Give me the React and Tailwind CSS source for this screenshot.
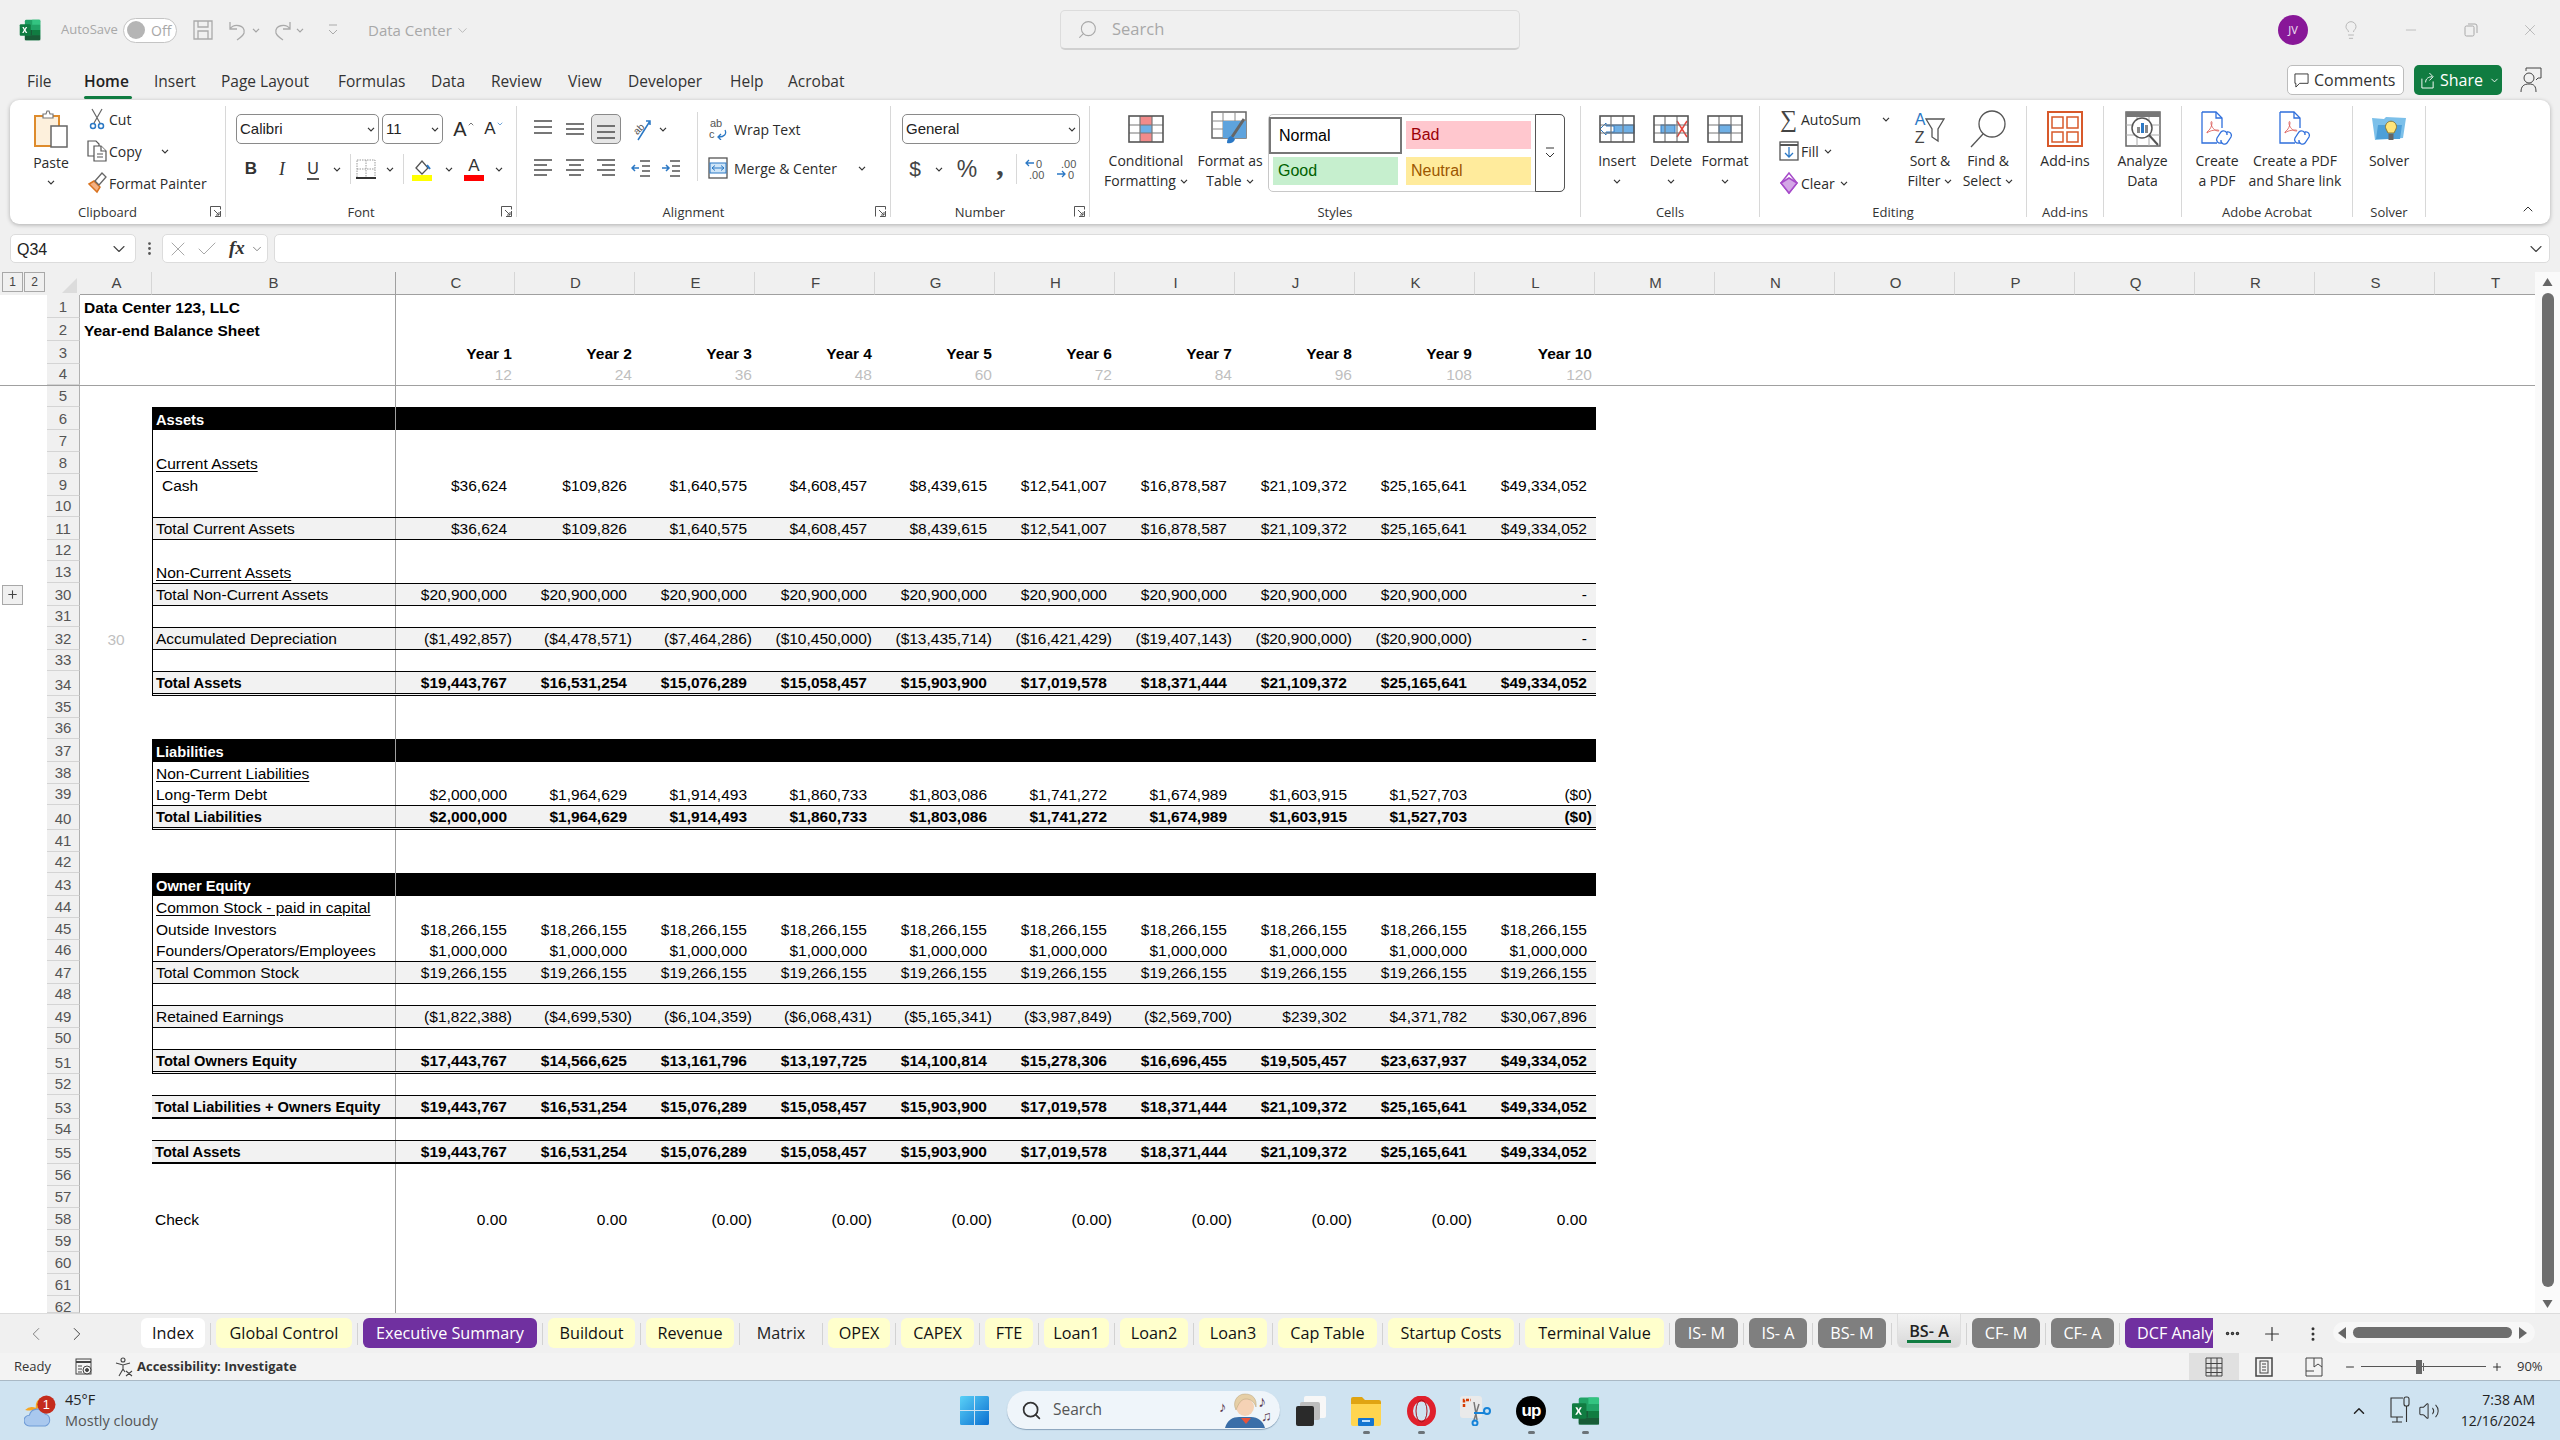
import { ChevronDown, ChevronLeft, ChevronRight, ChevronUp, Search, X, Check, Plus, Minus, MoreVertical, MoreHorizontal, Volume2, Lightbulb } from "lucide-react";

const Y1 = ["$19,443,767", "$16,531,254", "$15,076,289", "$15,058,457", "$15,903,900", "$17,019,578", "$18,371,444", "$21,109,372", "$25,165,641", "$49,334,052"];
const CASH = ["$36,624", "$109,826", "$1,640,575", "$4,608,457", "$8,439,615", "$12,541,007", "$16,878,587", "$21,109,372", "$25,165,641", "$49,334,052"];
const rep = (v, n = 10) => Array(n).fill(v);

// h = row height, everything is bottom aligned like excel does it
const ROWS = [
  { n: 1, h: "h-[23px]", a: "Data Center 123, LLC", boldA: true },
  { n: 2, h: "h-[23px]", a: "Year-end Balance Sheet", boldA: true },
  { n: 3, h: "h-[23px]", vals: ["Year 1", "Year 2", "Year 3", "Year 4", "Year 5", "Year 6", "Year 7", "Year 8", "Year 9", "Year 10"], year: true },
  { n: 4, h: "h-[22px]", vals: ["12", "24", "36", "48", "60", "72", "84", "96", "108", "120"], grey: true, freeze: true },
  { n: 5, h: "h-[21px]" },
  { n: 6, h: "h-[23px]", label: "Assets", black: true, left: true },
  { n: 7, h: "h-[22px]", left: true },
  { n: 8, h: "h-[22px]", label: "Current Assets", under: true, left: true },
  { n: 9, h: "h-[22px]", label: "Cash", indent: true, vals: CASH, left: true },
  { n: 10, h: "h-[21px]", left: true },
  { n: 11, h: "h-[23px]", label: "Total Current Assets", vals: CASH, band: true, left: true },
  { n: 12, h: "h-[21px]", left: true },
  { n: 13, h: "h-[22px]", label: "Non-Current Assets", under: true, left: true },
  { n: 30, h: "h-[23px]", label: "Total Non-Current Assets", vals: [...rep("$20,900,000", 9), "-"], band: true, left: true, plus: true },
  { n: 31, h: "h-[21px]", left: true },
  { n: 32, h: "h-[23px]", label: "Accumulated Depreciation", colA: "30", vals: ["($1,492,857)", "($4,478,571)", "($7,464,286)", "($10,450,000)", "($13,435,714)", "($16,421,429)", "($19,407,143)", "($20,900,000)", "($20,900,000)", "-"], band: true, left: true },
  { n: 33, h: "h-[21px]", left: true },
  { n: 34, h: "h-[25px]", label: "Total Assets", vals: Y1, band: true, bold: true, dbl: true, left: true },
  { n: 35, h: "h-[22px]" },
  { n: 36, h: "h-[21px]" },
  { n: 37, h: "h-[23px]", label: "Liabilities", black: true, left: true },
  { n: 38, h: "h-[22px]", label: "Non-Current Liabilities", under: true, left: true },
  { n: 39, h: "h-[21px]", label: "Long-Term Debt", vals: ["$2,000,000", "$1,964,629", "$1,914,493", "$1,860,733", "$1,803,086", "$1,741,272", "$1,674,989", "$1,603,915", "$1,527,703", "($0)"], left: true },
  { n: 40, h: "h-[25px]", label: "Total Liabilities", vals: ["$2,000,000", "$1,964,629", "$1,914,493", "$1,860,733", "$1,803,086", "$1,741,272", "$1,674,989", "$1,603,915", "$1,527,703", "($0)"], band: true, bold: true, dbl: true, left: true },
  { n: 41, h: "h-[22px]" },
  { n: 42, h: "h-[21px]" },
  { n: 43, h: "h-[23px]", label: "Owner Equity", black: true, left: true },
  { n: 44, h: "h-[22px]", label: "Common Stock - paid in capital", under: true, left: true },
  { n: 45, h: "h-[22px]", label: "Outside Investors", vals: rep("$18,266,155"), left: true },
  { n: 46, h: "h-[21px]", label: "Founders/Operators/Employees", vals: rep("$1,000,000"), left: true },
  { n: 47, h: "h-[23px]", label: "Total Common Stock", vals: rep("$19,266,155"), band: true, left: true },
  { n: 48, h: "h-[21px]", left: true },
  { n: 49, h: "h-[23px]", label: "Retained Earnings", vals: ["($1,822,388)", "($4,699,530)", "($6,104,359)", "($6,068,431)", "($5,165,341)", "($3,987,849)", "($2,569,700)", "$239,302", "$4,371,782", "$30,067,896"], band: true, left: true },
  { n: 50, h: "h-[21px]", left: true },
  { n: 51, h: "h-[25px]", label: "Total Owners Equity", vals: ["$17,443,767", "$14,566,625", "$13,161,796", "$13,197,725", "$14,100,814", "$15,278,306", "$16,696,455", "$19,505,457", "$23,637,937", "$49,334,052"], band: true, bold: true, dbl: true, left: true },
  { n: 52, h: "h-[21px]" },
  { n: 53, h: "h-[24px]", label: "Total Liabilities + Owners Equity", vals: Y1, band: true, bold: true, thick: true },
  { n: 54, h: "h-[21px]" },
  { n: 55, h: "h-[24px]", label: "Total Assets", vals: Y1, band: true, bold: true, thick: true },
  { n: 56, h: "h-[22px]" },
  { n: 57, h: "h-[22px]" },
  { n: 58, h: "h-[22px]", label: "Check", vals: ["0.00", "0.00", "(0.00)", "(0.00)", "(0.00)", "(0.00)", "(0.00)", "(0.00)", "(0.00)", "0.00"] },
  { n: 59, h: "h-[22px]" },
  { n: 60, h: "h-[22px]" },
  { n: 61, h: "h-[22px]" },
  { n: 62, h: "h-[17px]", last: true },
];

const YEL = "bg-[#ffffcc] text-[#111]";
const GRY = "bg-[#7f7f7f] text-white";
const PUR = "bg-[#7030a0] text-white";
const TABS = [
  ["Index", "w-[64px]", "bg-white text-[#111]"],
  ["Global Control", "w-[136px]", YEL],
  ["Executive Summary", "w-[174px]", PUR],
  ["Buildout", "w-[87px]", YEL],
  ["Revenue", "w-[88px]", YEL],
  ["Matrix", "w-[72px]", "text-[#222]"],
  ["OPEX", "w-[62px]", YEL],
  ["CAPEX", "w-[73px]", YEL],
  ["FTE", "w-[48px]", YEL],
  ["Loan1", "w-[65px]", YEL],
  ["Loan2", "w-[68px]", YEL],
  ["Loan3", "w-[68px]", YEL],
  ["Cap Table", "w-[99px]", YEL],
  ["Startup Costs", "w-[126px]", YEL],
  ["Terminal Value", "w-[139px]", YEL],
  ["IS- M", "w-[63px]", GRY],
  ["IS- A", "w-[58px]", GRY],
  ["BS- M", "w-[68px]", GRY],
  ["BS- A", "w-[64px]", "active"],
  ["CF- M", "w-[68px]", GRY],
  ["CF- A", "w-[63px]", GRY],
  ["DCF Analysis", "w-[120px]", PUR],
];

const Chev = ({ className = "" }) => (
  <svg viewBox="0 0 8 5" className={`h-[5px] w-[8px] flex-none ${className}`} fill="none" stroke="#333" strokeWidth="1.2">
    <path d="M1 .8l3 3 3-3" />
  </svg>
);

function ExcelLogo({ className }) {
  return (
    <svg viewBox="0 0 30 30" className={className}>
      <rect x="8" y="1" width="21" height="28" rx="2" fill="#21a366" />
      <rect x="18" y="1" width="11" height="7" fill="#33c481" />
      <rect x="18" y="8" width="11" height="7" fill="#21a366" />
      <rect x="18" y="15" width="11" height="7" fill="#107c41" />
      <rect x="8" y="15" width="10" height="7" fill="#185c37" />
      <rect x="8" y="22" width="21" height="7" fill="#185c37" />
      <rect x="1" y="7" width="15" height="16" rx="1.5" fill="#107c41" />
      <path d="M4.5 11l2.2 4-2.4 4h2l1.5-2.8L9.3 19h2l-2.4-4 2.3-4h-2L7.9 13.7 6.5 11z" fill="#fff" />
    </svg>
  );
}

function GridIcon({ children, className = "w-[36px] h-[28px]" }) {
  return (
    <svg viewBox="0 0 36 28" className={className} fill="none">
      <rect x="1" y="1" width="34" height="26" fill="#fff" />
      {children}
      <path d="M12 1v26M24 1v26M1 10h34M1 18h34" stroke="#777" strokeWidth="1.2" />
      <rect x="1" y="1" width="34" height="26" stroke="#555" strokeWidth="1.6" />
    </svg>
  );
}

const Align = ({ lines }) => (
  <svg viewBox="0 0 20 20" className="h-[20px] w-[20px]" stroke="#555" strokeWidth="1.6" fill="none">
    {lines.map((l, i) => <path key={i} d={`M${l[0]} ${l[2]}H${l[1]}`} />)}
  </svg>
);

function Small({ icon, children, w = "w-[25px]", chev, chevClass = "ml-[5px]" }) {
  return (
    <div className="flex h-[28px] items-center">
      <div className={`flex ${w} flex-none items-center justify-center`}>{icon}</div>
      <span className="whitespace-nowrap">{children}</span>
      {chev && <Chev className={chevClass} />}
    </div>
  );
}

function Big({ w, icon, l1, l2, chev }) {
  return (
    <div className={`flex ${w} flex-none flex-col items-center pt-[4px]`}>
      <div className="flex h-[38px] items-center justify-center">{icon}</div>
      <div className="mt-[3px] whitespace-nowrap text-center leading-[20px]">{l1}</div>
      <div className="flex h-[20px] items-center justify-center whitespace-nowrap leading-[20px]">
        {l2}
        {chev && <Chev className={l2 ? "ml-[4px]" : ""} />}
      </div>
    </div>
  );
}

function Launcher() {
  return (
    <svg viewBox="0 0 11 11" className="absolute bottom-[0px] right-[4px] h-[11px] w-[11px]" fill="none" stroke="#555" strokeWidth="1">
      <path d="M.5 10.5V.5h10v3M10.5 5v5.5H5M4 4l5 5M9 6v3H6" />
    </svg>
  );
}

function Group({ w, label, launcher, children }) {
  return (
    <div className={`relative flex h-[111px] flex-none flex-col ${w} border-r border-[#d8d8d8]`}>
      <div className="flex h-[95px] flex-none">{children}</div>
      {label && <div className={`-mb-[3px] mt-auto h-[16px] text-center text-[13px] leading-[16px] text-[#333] ${launcher ? "pr-[20px]" : ""}`}>{label}</div>}
      {launcher && <Launcher />}
    </div>
  );
}

const Slot = ({ w, children }) => <div className={`flex ${w} h-[28px] flex-none items-center justify-center`}>{children}</div>;
const VSep = () => <div className="h-[30px] w-px flex-none bg-[#d8d8d8]" />;

function DropBox({ w, children }) {
  return (
    <div className={`flex h-[30px] ${w} flex-none items-center justify-between rounded-[5px] border border-[#8a8a8a] bg-white pl-[3px] pr-[3px] text-[#222]`}>
      <span className="font-['Liberation_Sans',sans-serif] text-[15px]">{children}</span>
      <Chev />
    </div>
  );
}

const StyleCell = ({ cls, children }) => (
  <div className={`flex h-[28px] w-[125px] items-center pl-[5px] font-['Liberation_Sans',sans-serif] text-[16px] ${cls}`}>{children}</div>
);

function PdfIcon() {
  return (
    <svg viewBox="0 0 32 36" className="h-[36px] w-[32px]" fill="none" stroke="#2f6fdc" strokeWidth="1.3">
      <path d="M1 1h14l6 6v10M1 1v31h15" fill="#fff" />
      <path d="M15 1v6h6" />
      <path d="M6 21c3-2 5-6 5-9 0-2-1-2-1 0 0 4 4 8 7 8 2 0 1-1-1-1-4 0-8 1-10 3z" stroke="#d9534f" strokeWidth=".8" />
      <path d="M20 32a3.5 3.5 0 0 1-4-5l4-6a3.5 3.5 0 0 1 6 3M26 21a3.5 3.5 0 0 1 4 5l-4 6a3.5 3.5 0 0 1-6-3" />
    </svg>
  );
}

function Ribbon() {
  return (
    <div className="mx-[10px] flex h-[124px] flex-none items-start rounded-[9px] bg-white pt-[6px] text-[14px] text-[#2b2b2b] shadow-[0_1px_4px_rgba(0,0,0,0.28)]">
      <Group w="w-[216px]" label="Clipboard" launcher>
        <div className="ml-[8px] w-[66px]">
          <div className="flex flex-col items-center pt-[4px]">
            <svg viewBox="0 0 34 38" className="h-[38px] w-[34px]">
              <rect x="1" y="6" width="24" height="30" fill="#fdf0dc" stroke="#de8b2c" strokeWidth="2" />
              <path d="M9 6V4h3l1-3 2 0 1 3h3v4H9z" fill="#fff" stroke="#777" strokeWidth="1.2" />
              <rect x="17" y="16" width="16" height="21" fill="#fff" stroke="#666" strokeWidth="1.5" />
            </svg>
            <div className="mt-[5px] leading-[20px]">Paste</div>
            <div className="flex h-[18px] items-center"><Chev /></div>
          </div>
        </div>
        <div className="-mt-[1px] flex flex-col gap-[4px]">
          <Small icon={<svg viewBox="0 0 16 22" className="h-[22px] w-[16px]" fill="none"><path d="M3 1l8 14M13 1L5 15" stroke="#666" strokeWidth="1.2" /><circle cx="4" cy="18" r="2.5" stroke="#2b78c5" strokeWidth="1.5" /><circle cx="12" cy="18" r="2.5" stroke="#2b78c5" strokeWidth="1.5" /></svg>}>Cut</Small>
          <Small chev chevClass="ml-[19px]" icon={<svg viewBox="0 0 20 22" className="h-[22px] w-[20px]" fill="#fff" stroke="#555" strokeWidth="1.2"><path d="M1 1h8l3 3v12H1z" /><path d="M7 6h7l5 5v10H7z" /><path d="M14 6v5h5M10 14h6M10 17h6" /></svg>}>Copy</Small>
          <Small icon={<svg viewBox="0 0 22 24" className="h-[24px] w-[22px]" fill="none"><path d="M3 13l8 8 3-5-6-6z" fill="#f4b183" stroke="#d9731f" strokeWidth="1.5" /><path d="M9 10l7-8 4 4-7 8z" fill="#fff" stroke="#666" strokeWidth="1.3" /></svg>}>Format Painter</Small>
        </div>
      </Group>

      <Group w="w-[291px]" label="Font" launcher>
        <div className="flex w-full flex-col pt-[8px]">
          <div className="flex items-center pl-[10px]">
            <DropBox w="w-[143px]">Calibri</DropBox>
            <DropBox w="w-[61px] ml-[3px]">11</DropBox>
            <div className="ml-[6px] flex w-[30px] items-center justify-center font-['Liberation_Sans',sans-serif] text-[20px]">A<ChevronUp size={8} className="mb-[10px] text-[#333]" /></div>
            <div className="flex w-[30px] items-center justify-center font-['Liberation_Sans',sans-serif] text-[17px]">A<ChevronDown size={8} className="mb-[10px] text-[#2b78c5]" /></div>
          </div>
          <div className="mt-[10px] flex items-center pl-[10px] font-['Liberation_Sans',sans-serif] text-[#333]">
            <Slot w="w-[30px]"><b className="text-[17px]">B</b></Slot>
            <Slot w="w-[32px]"><i className="font-['Liberation_Serif',serif] text-[18px]">I</i></Slot>
            <Slot w="w-[30px]"><span className="border-b-2 border-[#555] text-[16px] leading-[19px]">U</span></Slot>
            <Slot w="w-[18px]"><Chev /></Slot>
            <div className="ml-[4px]"><VSep /></div>
            <Slot w="w-[30px]">
              <svg viewBox="0 0 20 20" className="h-[20px] w-[20px]" fill="none" stroke="#999" strokeDasharray="1.5 1"><rect x="1" y="1" width="18" height="18" /><path d="M10 1v18M1 10h18" /><path d="M0 19h20" stroke="#333" strokeWidth="2" strokeDasharray="none" /></svg>
            </Slot>
            <Slot w="w-[18px]"><Chev /></Slot>
            <div className="ml-[4px]"><VSep /></div>
            <Slot w="w-[36px]">
              <svg viewBox="0 0 22 24" className="h-[24px] w-[22px]" fill="none"><path d="M5 11l6-7 6 7-6 6z" fill="#fff" stroke="#555" strokeWidth="1.3" /><path d="M16 8l3 4" stroke="#2b78c5" strokeWidth="2" /><rect x="1" y="18" width="20" height="6" fill="#ffff00" /></svg>
            </Slot>
            <Slot w="w-[18px]"><Chev /></Slot>
            <Slot w="w-[32px]">
              <div className="flex flex-col items-center"><span className="text-[17px] leading-[18px]">A</span><span className="h-[6px] w-[20px] bg-[#ff0000]" /></div>
            </Slot>
            <Slot w="w-[18px]"><Chev /></Slot>
          </div>
        </div>
      </Group>

      <Group w="w-[374px]" label="Alignment" launcher>
        <div className="flex w-[180px] flex-none flex-col pl-[10px] pt-[8px]">
          <div className="flex h-[30px] items-center">
            <div className="flex w-[32px] justify-center"><Align lines={[[1, 19, 2], [1, 19, 8], [1, 19, 14]]} /></div>
            <div className="flex w-[32px] justify-center"><Align lines={[[1, 19, 5], [1, 19, 10], [1, 19, 15]]} /></div>
            <div className="flex h-[30px] w-[30px] items-center justify-center rounded-[5px] border border-[#8a8a8a] bg-[#e6e6e6]"><Align lines={[[1, 19, 7], [1, 19, 13], [1, 19, 19]]} /></div>
            <div className="ml-[5px] flex w-[30px] justify-center">
              <svg viewBox="0 0 24 26" className="h-[26px] w-[24px]" fill="none"><path d="M9 24L21 5M17 5h4v4" stroke="#2b78c5" strokeWidth="1.5" /><text x="4" y="17" fontSize="10" fill="#555" transform="rotate(-45 9 13)" fontFamily="Liberation Sans">ab</text></svg>
            </div>
            <Chev className="ml-[3px]" />
          </div>
          <div className="mt-[10px] flex h-[28px] items-center">
            <div className="flex w-[32px] justify-center"><Align lines={[[1, 19, 2], [1, 14, 7], [1, 19, 12], [1, 14, 17]]} /></div>
            <div className="flex w-[32px] justify-center"><Align lines={[[1, 19, 2], [4, 16, 7], [1, 19, 12], [4, 16, 17]]} /></div>
            <div className="flex w-[30px] justify-center"><Align lines={[[1, 19, 2], [6, 19, 7], [1, 19, 12], [6, 19, 17]]} /></div>
            <div className="ml-[5px] flex w-[30px] justify-center">
              <svg viewBox="0 0 20 20" className="h-[20px] w-[20px]" fill="none" strokeWidth="1.5"><path d="M9 3h10M11 8h8M11 13h8M9 18h10" stroke="#555" /><path d="M8 10H1M4 7l-3 3 3 3" stroke="#2b78c5" /></svg>
            </div>
            <div className="flex w-[30px] justify-center">
              <svg viewBox="0 0 20 20" className="h-[20px] w-[20px]" fill="none" strokeWidth="1.5"><path d="M9 3h10M11 8h8M11 13h8M9 18h10" stroke="#555" /><path d="M1 10h7M5 7l3 3-3 3" stroke="#2b78c5" /></svg>
            </div>
          </div>
        </div>
        <div className="mb-[20px] mt-[6px] w-px flex-none bg-[#d8d8d8]" />
        <div className="flex flex-col pl-[10px] pt-[8px]">
          <div className="flex h-[30px] items-center">
            <div className="flex w-[26px] justify-start">
              <svg viewBox="0 0 20 22" className="h-[22px] w-[20px]" fill="none"><text x="2" y="9" fontSize="11" fill="#555" fontFamily="Liberation Sans">ab</text><text x="1" y="20" fontSize="11" fill="#555" fontFamily="Liberation Sans">c</text><path d="M17 12c2 4-1 7-6 7M13 16l-3 3 3 3" stroke="#2b78c5" strokeWidth="1.3" /></svg>
            </div>
            <span>Wrap Text</span>
          </div>
          <div className="mt-[10px] flex h-[28px] items-center">
            <div className="flex w-[26px] justify-start">
              <svg viewBox="0 0 20 22" className="h-[22px] w-[20px]" fill="none"><rect x="1" y="1" width="18" height="20" fill="#fff" stroke="#555" strokeWidth="1.3" /><rect x="2" y="6" width="16" height="10" fill="#cfe5f7" stroke="#2b78c5" /><path d="M4 11h12M7 8.5L4 11l3 2.5M13 8.5l3 2.5-3 2.5" stroke="#2b78c5" /></svg>
            </div>
            <span>Merge &amp; Center</span>
            <Chev className="ml-[21px]" />
          </div>
        </div>
      </Group>

      <Group w="w-[199px]" label="Number" launcher>
        <div className="flex w-full flex-col pl-[11px] pt-[8px]">
          <DropBox w="w-[178px]">General</DropBox>
          <div className="mt-[10px] flex items-center font-['Liberation_Sans',sans-serif] text-[#444]">
            <Slot w="w-[26px]"><span className="text-[21px]">$</span></Slot>
            <Slot w="w-[22px]"><Chev /></Slot>
            <Slot w="w-[34px]"><span className="text-[23px]">%</span></Slot>
            <Slot w="w-[32px]"><span className="-mt-[8px] font-['Liberation_Serif',serif] text-[30px] font-bold leading-[22px]">,</span></Slot>
            <div className="mr-[4px]"><VSep /></div>
            <Slot w="w-[28px]">
              <svg viewBox="0 0 22 22" className="h-[22px] w-[22px]" fill="none">
                <path d="M10 5H2M5 2L2 5l3 3" stroke="#2b78c5" strokeWidth="1.3" />
                <text x="12" y="10" fontSize="11" fill="#555" fontFamily="Liberation Sans">0</text>
                <text x="5" y="21" fontSize="11" fill="#555" fontFamily="Liberation Sans">.00</text>
              </svg>
            </Slot>
            <Slot w="w-[33px]">
              <svg viewBox="0 0 22 22" className="h-[22px] w-[22px]" fill="none">
                <text x="6" y="10" fontSize="11" fill="#555" fontFamily="Liberation Sans">.00</text>
                <path d="M2 16h8M7 13l3 3-3 3" stroke="#2b78c5" strokeWidth="1.3" />
                <text x="13" y="21" fontSize="11" fill="#555" fontFamily="Liberation Sans">0</text>
              </svg>
            </Slot>
          </div>
        </div>
      </Group>

      <Group w="w-[491px]" label="Styles">
        <div className="ml-[10px] flex">
          <Big w="w-[92px]" l1="Conditional" l2="Formatting" chev icon={<GridIcon><rect x="12" y="1" width="12" height="9" fill="#f28b8b" /><rect x="12" y="18" width="12" height="9" fill="#f28b8b" /><rect x="12" y="10" width="12" height="8" fill="#6fb0e6" /></GridIcon>} />
          <Big w="w-[76px]" l1="Format as" l2="Table" chev icon={
            <svg viewBox="0 0 38 36" className="h-[36px] w-[38px]" fill="none">
              <rect x="1" y="1" width="34" height="26" fill="#fff" stroke="#666" strokeWidth="1.5" />
              <path d="M12 1v26M24 1v26M1 10h34M1 18h34" stroke="#888" />
              <rect x="12" y="10" width="23" height="17" fill="#5ea3dd" />
              <path d="M33 8L21 26" stroke="#666" strokeWidth="3" />
              <path d="M20 25c-3 1-4 4-4 7 3 1 7 0 8-4z" fill="#2b78c5" />
            </svg>} />
          <div className="mt-[8px] flex h-[78px] w-[297px] flex-none rounded-[5px] border border-[#c8c8c8] pt-[2px]">
            <div className="grid h-[68px] w-[267px] grid-cols-[133px_125px] gap-x-[4px]">
              <div className="flex h-[37px] w-[133px] items-center border-2 border-[#777] bg-white pl-[8px] font-['Liberation_Sans',sans-serif] text-[16px] text-black">Normal</div>
              <div className="pt-[4px]"><StyleCell cls="bg-[#ffc7ce] text-[#9c0006]">Bad</StyleCell></div>
              <div className="pl-[4px] pt-[3px]"><StyleCell cls="bg-[#c6efce] text-[#006100]">Good</StyleCell></div>
              <div className="pt-[3px]"><StyleCell cls="bg-[#ffeb9c] text-[#9c5700]">Neutral</StyleCell></div>
            </div>
            <div className="-mb-px -mr-px -mt-[3px] ml-auto flex w-[30px] items-center justify-center rounded-r-[5px] border border-[#555]">
              <svg viewBox="0 0 10 12" className="h-[12px] w-[10px]" fill="none" stroke="#333"><path d="M1 1h8M1 6l4 4 4-4" /></svg>
            </div>
          </div>
        </div>
      </Group>

      <Group w="w-[179px]" label="Cells">
        <div className="ml-[5px] flex">
          <Big w="w-[62px]" l1="Insert" chev icon={<GridIcon><rect x="8" y="10" width="27" height="8" fill="#6fb0e6" stroke="#2b78c5" /><path d="M1 14l6-6v3h8v6H7v3z" fill="#fff" stroke="#2b78c5" /></GridIcon>} />
          <Big w="w-[46px]" l1="Delete" chev icon={<GridIcon><rect x="8" y="10" width="14" height="8" fill="#6fb0e6" stroke="#2b78c5" /><path d="M24 6l10 16M34 6L24 22" stroke="#e8453c" strokeWidth="1.5" /></GridIcon>} />
          <Big w="w-[62px]" l1="Format" chev icon={<GridIcon><rect x="12" y="10" width="12" height="8" fill="#6fb0e6" stroke="#2b78c5" /></GridIcon>} />
        </div>
      </Group>

      <Group w="w-[267px]" label="Editing">
        <div className="-mt-[1px] ml-[16px] flex w-[122px] flex-none flex-col gap-[4px]">
          <div className="flex h-[28px] items-center">
            <span className="flex w-[25px] justify-center font-['Liberation_Serif',serif] text-[24px] leading-[24px] text-[#444]">∑</span>
            <span>AutoSum</span>
            <Chev className="ml-[21px]" />
          </div>
          <Small chev icon={<svg viewBox="0 0 20 20" className="h-[20px] w-[20px]" fill="#fff" stroke="#555" strokeWidth="1.3"><rect x="1" y="1" width="18" height="18" /><path d="M1 4h18" strokeWidth="2" /><path d="M10 6v10M6 12l4 4 4-4" stroke="#2b78c5" fill="none" /></svg>}>Fill</Small>
          <Small chev icon={<svg viewBox="0 0 20 24" className="h-[24px] w-[20px]" fill="none" stroke="#a64ac9" strokeWidth="1.5"><path d="M10 2l8 10-8 10-8-10z" fill="#fff" /><path d="M2 12l8-5 8 5-8 10z" fill="#d3a6e6" /></svg>}>Clear</Small>
        </div>
        <div className="ml-[2px] flex">
          <Big w="w-[60px]" l1="Sort &" l2="Filter" chev icon={
            <div className="flex items-start">
              <span className="font-['Liberation_Sans',sans-serif] text-[16px] leading-[18px] text-[#444]"><span className="block text-[#2b78c5]">A</span><span className="block">Z</span></span>
              <svg viewBox="0 0 20 26" className="mt-[6px] h-[26px] w-[20px]" fill="#fff" stroke="#555" strokeWidth="1.3"><path d="M1 2h18l-6 10v12l-6-4v-8z" /></svg>
            </div>} />
          <Big w="w-[56px]" l1="Find &" l2="Select" chev icon={<svg viewBox="0 0 38 38" className="h-[38px] w-[38px]" fill="#fff" stroke="#555" strokeWidth="1.3"><circle cx="23" cy="14" r="13" /><path d="M14 24L2 37" /></svg>} />
        </div>
      </Group>

      <Group w="w-[77px]" label="Add-ins">
        <Big w="w-[76px]" l1="Add-ins" icon={<svg viewBox="0 0 36 36" className="h-[36px] w-[36px]" fill="none" stroke="#d8592a" strokeWidth="2"><rect x="1" y="1" width="34" height="34" /><rect x="5" y="6" width="11" height="11" strokeWidth="1.5" /><rect x="20" y="6" width="11" height="11" strokeWidth="1.5" /><rect x="5" y="21" width="11" height="10" strokeWidth="1.5" /><rect x="20" y="21" width="11" height="10" strokeWidth="1.5" /></svg>} />
      </Group>

      <Group w="w-[78px]">
        <Big w="w-[77px]" l1="Analyze" l2="Data" icon={
          <svg viewBox="0 0 36 36" className="h-[36px] w-[36px]" fill="none">
            <rect x="1" y="1" width="34" height="34" fill="#fff" stroke="#666" strokeWidth="1.5" />
            <rect x="1" y="1" width="34" height="5" fill="#777" />
            <path d="M12 6v29M24 6v29M1 14h34M1 24h34" stroke="#aaa" />
            <circle cx="17" cy="17" r="10" fill="#fff" stroke="#555" strokeWidth="1.5" />
            <path d="M24 24l9 10" stroke="#555" strokeWidth="2" />
            <rect x="12" y="16" width="3" height="6" fill="#888" /><rect x="16" y="12" width="3" height="10" fill="#2b78c5" /><rect x="20" y="14" width="3" height="8" fill="#888" />
          </svg>} />
      </Group>

      <Group w="w-[171px]" label="Adobe Acrobat">
        <Big w="w-[70px]" l1="Create" l2="a PDF" icon={<PdfIcon />} />
        <Big w="w-[86px]" l1="Create a PDF" l2="and Share link" icon={<PdfIcon />} />
      </Group>

      <Group w="w-[73px]" label="Solver">
        <Big w="w-[72px]" l1="Solver" icon={
          <svg viewBox="0 0 38 28" className="h-[28px] w-[38px]">
            <path d="M2 3l12 1 2-2 20 1-3 20-28 2z" fill="#7cc0ea" />
            <path d="M8 10h24l-2 14H6z" fill="#4d9fd8" />
            <path d="M16 14a5.5 5.5 0 1 1 10 0l-2 4h-6z" fill="#ffe57a" stroke="#8a7a3a" />
            <rect x="18.500" y="19" width="5" height="6" fill="#666" />
          </svg>} />
      </Group>

      <div className="relative h-[111px] flex-1">
        <ChevronUp size={16} strokeWidth={1.5} className="absolute bottom-[0px] right-[14px] text-[#333]" />
      </div>
    </div>
  );
}

function TitleBar() {
  return (
    <div className="flex h-[60px] flex-none items-center text-[14px] text-[#a8a8a8]">
      <div className="flex w-[1060px] flex-none items-center">
        <ExcelLogo className="ml-[19px] h-[22px] w-[22px]" />
        <span className="ml-[20px] w-[54px] text-[13px]">AutoSave</span>
        <div className="ml-[8px] flex h-[25px] w-[54px] items-center rounded-full border border-[#c4c4c4] bg-white pl-[3px]">
          <span className="h-[18px] w-[18px] rounded-full bg-[#b5b5b5]" />
          <span className="ml-[6px]">Off</span>
        </div>
        <svg viewBox="0 0 20 20" className="ml-[16px] h-[20px] w-[20px]" fill="none" stroke="#aaa" strokeWidth="1.3"><path d="M1 1h18v18H1zM5 1v6h10V1M5 19v-8h10v8" /></svg>
        <svg viewBox="0 0 20 20" className="ml-[15px] h-[22px] w-[20px]" fill="none" stroke="#aaa" strokeWidth="1.3"><path d="M2 2v7h7M2 9c4-6 16-4 14 4-1 3-4 5-7 7" /></svg>
        <Chev className="ml-[4px] opacity-40" />
        <svg viewBox="0 0 20 20" className="ml-[12px] h-[22px] w-[20px]" fill="none" stroke="#aaa" strokeWidth="1.3"><path d="M18 2v7h-7M18 9C14 3 2 5 4 13c1 3 4 5 7 7" /></svg>
        <Chev className="ml-[4px] opacity-40" />
        <svg viewBox="0 0 10 12" className="ml-[24px] h-[12px] w-[10px]" fill="none" stroke="#aaa"><path d="M1 1h8M1 6l4 4 4-4" /></svg>
        <span className="ml-[30px] text-[15px]">Data Center</span>
        <ChevronDown size={15} strokeWidth={1.2} className="ml-[3px] text-[#a8a8a8]" />
      </div>
      <div className="flex h-[40px] w-[460px] flex-none items-center rounded-[5px] border border-b-2 border-[#dcdcdc] border-b-[#d0d0d0] pl-[16px]">
        <Search size={21} strokeWidth={1.2} className="-scale-x-100 text-[#a8a8a8]" />
        <span className="ml-[14px] text-[16.5px]">Search</span>
      </div>
      <div className="flex flex-1 items-center justify-end">
        <div className="flex h-[30px] w-[30px] items-center justify-center rounded-full bg-[#881798] text-[11px] text-white/90">JV</div>
        <Lightbulb size={20} strokeWidth={1.2} className="ml-[33px] text-[#b8b8b8]" />
        <Minus size={16} strokeWidth={1} className="ml-[42px] text-[#a8a8a8]" />
        <svg viewBox="0 0 14 14" className="ml-[45px] h-[14px] w-[14px]" fill="none" stroke="#a8a8a8"><rect x="1" y="3" width="9" height="10" rx="1.5" /><path d="M4 1h7a2 2 0 0 1 2 2v7" /></svg>
        <X size={18} strokeWidth={1} className="ml-[43px] mr-[21px] text-[#a8a8a8]" />
      </div>
    </div>
  );
}

function MenuBar() {
  const items = [["File", "w-[57px]"], ["Home", "w-[70px]"], ["Insert", "w-[67px]"], ["Page Layout", "w-[117px]"], ["Formulas", "w-[93px]"], ["Data", "w-[60px]"], ["Review", "w-[77px]"], ["View", "w-[60px]"], ["Developer", "w-[102px]"], ["Help", "w-[58px]"], ["Acrobat", "w-[70px]"]];
  return (
    <div className="flex h-[40px] flex-none items-start justify-between pr-[18px] pt-[5px]">
      <div className="flex h-[35px] pl-[27px] text-[15.5px] text-[#333]">
        {items.map(([t, w]) => (
          <div key={t} className={`relative ${w} whitespace-nowrap leading-[32px] ${t === "Home" ? "font-semibold text-[#222]" : ""}`}>
            {t}
            {t === "Home" && <span className="absolute bottom-[1px] left-0 h-[3px] w-[48px] rounded-full bg-[#107c41]" />}
          </div>
        ))}
      </div>
      <div className="flex items-center text-[16px]">
        <div className="flex h-[30px] w-[117px] items-center rounded-[5px] border border-[#bcbcbc] bg-white pl-[6px] text-[#333]">
          <svg viewBox="0 0 16 16" className="h-[15px] w-[15px]" fill="none" stroke="#333"><path d="M1 1h14v10H6l-4 4v-4H1z" /></svg>
          <span className="ml-[5px]">Comments</span>
        </div>
        <div className="ml-[10px] flex h-[30px] w-[88px] items-center rounded-[5px] bg-[#107c41] pl-[6px] font-medium text-white">
          <svg viewBox="0 0 16 18" className="h-[17px] w-[15px]" fill="none" stroke="#fff"><path d="M2 7v10h12V10M6 11c0-4 3-6 7-6M10 1l4 4-4 4" /></svg>
          <span className="ml-[5px]">Share</span>
          <ChevronDown size={11} className="ml-[6px]" />
        </div>
        <svg viewBox="0 0 22 26" className="ml-[18px] h-[26px] w-[22px]" fill="none" stroke="#444"><circle cx="9" cy="11" r="5" /><path d="M1 25c0-6 3-8 8-8s7 2 7 8M6 4V1h15v10h-3l-2 2" /></svg>
      </div>
    </div>
  );
}

function FormulaBar() {
  return (
    <div className="mx-[10px] mt-[10px] flex h-[29px] flex-none items-center text-[15px] text-[#222]">
      <div className="flex h-full w-[126px] flex-none items-center justify-between rounded-[5px] border border-[#dcdcdc] bg-white pl-[6px] pr-[6px] font-['Liberation_Sans',sans-serif] text-[16px]">
        <span className="pt-[2px]">Q34</span>
        <ChevronDown size={20} strokeWidth={1.3} className="text-[#444]" />
      </div>
      <div className="flex w-[26px] flex-none justify-center">
        <MoreVertical size={17} className="text-[#555]" />
      </div>
      <div className="flex h-full w-[106px] flex-none items-center rounded-[5px] border border-[#dcdcdc] bg-white pl-[3px]">
        <X size={24} strokeWidth={1} className="text-[#a8a8a8]" />
        <Check size={24} strokeWidth={1} className="ml-[5px] text-[#a8a8a8]" />
        <i className="ml-[10px] font-['Liberation_Serif',serif] text-[19px] font-bold text-[#333]">fx</i>
        <ChevronDown size={14} strokeWidth={1.2} className="ml-[5px] text-[#555]" />
      </div>
      <div className="ml-[6px] flex h-full flex-1 items-center justify-end rounded-[5px] border border-[#dcdcdc] bg-white pr-[3px]">
        <ChevronDown size={20} strokeWidth={1.3} className="text-[#444]" />
      </div>
    </div>
  );
}

const COLS = ["C", "D", "E", "F", "G", "H", "I", "J", "K", "L"];
const MORE = ["M", "N", "O", "P", "Q", "R", "S", "T"];

function Row({ r }) {
  let bandCls = "";
  if (r.black) bandCls = "bg-black text-white font-bold";
  else if (r.band) bandCls = "bg-[#f2f2f2] border-t border-black border-b";
  if (r.dbl) bandCls = "bg-[#f2f2f2] border-t border-black border-b-[3px] border-double font-bold border-t-black";
  if (r.thick) bandCls = "bg-[#f2f2f2] border-t border-b-2 border-black font-bold";
  return (
    <div className={`flex ${r.h} flex-none items-stretch ${r.freeze ? "border-b border-[#a0a0a0]" : ""}`}>
      <div className="flex w-[47px] flex-none items-center pl-[2px]">
        {r.plus && <div className="flex h-[20px] w-[21px] items-center justify-center border border-[#a8a8a8] bg-[#f0f0f0]"><Plus size={13} className="text-[#444]" /></div>}
      </div>
      <div className={`flex w-[33px] flex-none justify-center border-b border-r border-[#d4d4d4] border-r-[#b0b0b0] bg-[#f0f0f0] text-[15px] text-[#555] ${r.last ? "items-start pt-[4px] leading-[13px]" : "items-end leading-[20px]"}`}>{r.n}</div>
      <div className={`flex w-[72px] flex-none items-end whitespace-nowrap leading-[20px] ${r.a ? "pl-[4px]" : ""} ${r.boldA ? "font-bold" : ""} ${r.colA ? "justify-center text-[#bfbfbf]" : ""}`}>
        {r.a}{r.colA}
      </div>
      <div className={`flex w-[1444px] flex-none ${bandCls} ${r.left ? "border-l border-l-black" : ""}`}>
        <div className={`flex flex-none items-end whitespace-nowrap border-r border-r-[#a0a0a0] leading-[20px] ${r.left ? "w-[243px]" : "w-[244px]"} ${r.indent ? "pl-[9px]" : "pl-[3px]"} ${r.bold || r.black ? "text-[14.7px]" : ""}`}>
          <span className={r.under ? "underline underline-offset-[2px]" : ""}>{r.label}</span>
        </div>
        {COLS.map((c, i) => {
          const v = r.vals?.[i];
          const paren = v && v.endsWith(")");
          return (
            <div key={c} className={`flex ${i === 0 ? "w-[119px]" : "w-[120px]"} flex-none items-end justify-end whitespace-nowrap leading-[20px] ${r.year ? "pr-[3px] font-bold" : r.grey ? "pr-[3px] text-[#bfbfbf]" : paren ? "pr-[3px]" : "pr-[8px]"}`}>
              {v}
            </div>
          );
        })}
      </div>
    </div>
  );
}

function Sheet() {
  return (
    <div className="relative flex min-h-0 flex-1 overflow-hidden bg-white font-['Liberation_Sans',sans-serif] text-[15.5px] text-black">
      <div className="min-w-0 flex-1 overflow-hidden">
        <div className="flex h-[23px] bg-[#f0f0f0] text-[15px] text-[#444]">
          <div className="flex w-[47px] flex-none gap-[1px] pl-[2px]">
            <div className="flex h-[20px] w-[21px] items-center justify-center border border-[#a8a8a8] text-[12px]">1</div>
            <div className="flex h-[20px] w-[21px] items-center justify-center border border-[#a8a8a8] text-[12px]">2</div>
          </div>
          <div className="flex w-[33px] flex-none items-end justify-end pb-[2px] pr-[3px]">
            <svg viewBox="0 0 15 15" className="h-[15px] w-[15px]"><path d="M15 0v15H0z" fill="#dcdcdc" /></svg>
          </div>
          <div className="flex w-[72px] flex-none items-center justify-center border-b border-r border-[#a0a0a0] border-r-[#d6d6d6] pl-[2px]">A</div>
          <div className="flex w-[244px] flex-none items-center justify-center border-b border-r border-[#a0a0a0]">B</div>
          {[...COLS, ...MORE].map((c, i) => (
            <div key={c} className={`flex ${i === 0 ? "w-[119px]" : "w-[120px]"} flex-none items-center justify-center border-b border-r border-[#a0a0a0] border-r-[#d6d6d6] pl-[2px]`}>{c}</div>
          ))}
        </div>
        {ROWS.map((r) => <Row key={r.n} r={r} />)}
      </div>
      <div className="flex w-[25px] flex-none flex-col items-center bg-[#fafafa] pt-[6px]">
        <svg viewBox="0 0 10 8" className="h-[8px] w-[11px]"><path d="M5 0l5 8H0z" fill="#666" /></svg>
        <div className="mt-[7px] w-[12px] flex-1 rounded-full bg-[#6e6e6e]" />
        <svg viewBox="0 0 10 8" className="mb-[5px] mt-[13px] h-[8px] w-[11px]"><path d="M5 8l5-8H0z" fill="#666" /></svg>
      </div>
    </div>
  );
}

function TabBar() {
  return (
    <div className="flex h-[40px] flex-none border-t border-[#dcdcdc] bg-[#f0f0f0] text-[16.2px]">
      <div className="flex w-[141px] flex-none items-center pl-[25px] text-[#777]">
        <ChevronLeft size={22} strokeWidth={1} />
        <ChevronRight size={22} strokeWidth={1} className="ml-[19px] text-[#333]" />
      </div>
      <div className="flex w-[2072px] flex-none gap-[5px] overflow-hidden">
        {TABS.map(([t, w, c], i) => (
          <div key={t} className="flex flex-none gap-[5px]">
            {i > 0 && <div className="mt-[9px] h-[22px] w-px bg-[#d2d2d2]" />}
            {c === "active" ? (
              <div className={`relative flex h-[34px] ${w} flex-none justify-center rounded-b-[6px] border border-t-0 border-[#dedede] bg-linear-to-b from-[#f4f4f4] to-[#d8d8d8] pt-[5px] font-semibold text-[#222]`}>
                {t}
                <span className="absolute bottom-[4px] left-[9px] h-[3px] w-[44px] bg-[#107c41]" />
              </div>
            ) : (
              <div className={`mt-[4px] flex h-[30px] ${w} flex-none items-center whitespace-nowrap rounded-[6px] pt-[1px] ${c} ${t === "DCF Analysis" ? "justify-start pl-[12px]" : "justify-center"}`}>{t}</div>
            )}
          </div>
        ))}
      </div>
      <div className="flex w-[38px] flex-none items-center justify-center"><MoreHorizontal size={17} strokeWidth={3} className="text-[#333]" /></div>
      <div className="flex w-[42px] flex-none items-center justify-center"><Plus size={22} strokeWidth={1.3} className="text-[#333]" /></div>
      <div className="flex w-[40px] flex-none items-center justify-center"><MoreVertical size={18} className="text-[#333]" /></div>
      <div className="my-[8px] flex h-[21px] w-[202px] flex-none items-center rounded-full bg-[#f7f7f7] px-[5px]">
        <svg viewBox="0 0 8 12" className="h-[12px] w-[8px]"><path d="M0 6l8-6v12z" fill="#666" /></svg>
        <div className="ml-[7px] h-[11px] w-[159px] rounded-full bg-[#6e6e6e]" />
        <svg viewBox="0 0 8 12" className="ml-[7px] h-[12px] w-[8px]"><path d="M8 6L0 0v12z" fill="#666" /></svg>
      </div>
    </div>
  );
}

function StatusBar() {
  return (
    <div className="flex h-[28px] flex-none items-center border-b border-[#aab9c5] bg-[#f3f3f3] text-[13px] text-[#333]">
      <span className="ml-[14px]">Ready</span>
      <svg viewBox="0 0 18 18" className="ml-[24px] h-[18px] w-[18px]" fill="none" stroke="#444"><rect x="1" y="1" width="15" height="15" /><path d="M1 4h15" strokeWidth="2" /><path d="M3 8h4M3 11h4M3 14h4" /><circle cx="12" cy="12" r="4" fill="#f3f3f3" /><circle cx="12" cy="12" r="1.5" fill="#444" /></svg>
      <svg viewBox="0 0 18 20" className="ml-[22px] h-[20px] w-[18px]" fill="none" stroke="#444" strokeWidth="1.1"><circle cx="8" cy="3" r="2" /><path d="M1 6l7 2 7-2M8 8v4l-4 7M8 12l2 3M11 14l6 5M17 14l-6 5" /></svg>
      <b className="ml-[4px] font-['Open_Sans',sans-serif] text-[13px]">Accessibility: Investigate</b>
      <div className="ml-auto flex h-full items-center">
        <div className="flex h-full w-[50px] items-center justify-center bg-[#e0e0e0]">
          <svg viewBox="0 0 18 20" className="h-[20px] w-[18px]" fill="none" stroke="#444"><path d="M1 1h16v18H1zM1 6.5h16M1 11h16M1 15.5h16M6 1v18M12 1v18" /></svg>
        </div>
        <div className="flex w-[50px] justify-center">
          <svg viewBox="0 0 18 20" className="h-[20px] w-[18px]" fill="none" stroke="#444"><rect x="1" y="1" width="16" height="18" strokeWidth="1.5" /><rect x="5" y="4" width="8" height="12" /><path d="M7 7h4M7 10h4M7 13h4" /></svg>
        </div>
        <div className="flex w-[50px] justify-center">
          <svg viewBox="0 0 18 20" className="h-[20px] w-[18px]" fill="none" stroke="#444"><path d="M1 1h16v18H1zM1 14h8M9 1v9l4-3 4 3" /></svg>
        </div>
        <Minus size={12} className="ml-[5px]" />
        <div className="relative ml-[5px] flex h-[14px] w-[125px] items-center">
          <div className="h-px w-full bg-[#555]" />
          <div className="absolute left-[55px] h-[14px] w-[6px] bg-[#666]" />
          <div className="absolute left-[62px] h-[8px] w-px bg-[#666]" />
        </div>
        <Plus size={12} className="ml-[5px]" />
        <span className="ml-[14px] mr-[17px] w-[26px]">90%</span>
      </div>
    </div>
  );
}

function TaskIcon({ children, w, ml, dot }) {
  return (
    <div className={`flex ${w} ${ml} flex-none flex-col items-center pt-[15px]`}>
      <div className="flex h-[30px] items-center justify-center">{children}</div>
      <div className={`mt-[5px] h-[3px] w-[7px] rounded-full ${dot ? "bg-[#6c7378]" : ""}`} />
    </div>
  );
}

function Taskbar() {
  return (
    <div className="flex min-h-0 flex-1 bg-[#cfe3f1] text-[#222]">
      <div className="flex w-[960px] flex-none items-center">
        <svg viewBox="0 0 30 30" className="ml-[24px] h-[32px] w-[32px] flex-none">
          <path d="M17 2a9 9 0 0 0-6 10 9 9 0 0 0-10 2c5 1 12 1 16-5z" fill="#f6a623" />
          <path d="M5 29a5 5 0 0 1 0-10 8 8 0 0 1 15-1 5 5 0 0 1 4 5 5.5 5.5 0 0 1-4 6z" fill="#a9c8ee" stroke="#6f9bd6" />
          <circle cx="21" cy="9" r="8.5" fill="#c42b1c" />
          <text x="21" y="13" fill="#fff" fontSize="12" textAnchor="middle" fontFamily="Liberation Sans">1</text>
        </svg>
        <div className="-mt-[2px] ml-[9px] text-[14.5px] leading-[21px]">
          <div>45°F</div>
          <div className="text-[#555]">Mostly cloudy</div>
        </div>
      </div>
      <div className="flex h-full w-[29px] flex-none items-center">
        <svg viewBox="0 0 29 29" className="h-[29px] w-[29px]">
          <defs><linearGradient id="winb" x1="0" y1="0" x2="1" y2="1"><stop offset="0" stopColor="#5ad1f7" /><stop offset="1" stopColor="#0a6fd1" /></linearGradient></defs>
          <path d="M0 1.5A1.5 1.5 0 0 1 1.5 0H14v14H0zM15 0h12.5A1.5 1.5 0 0 1 29 1.5V14H15zM0 15h14v14H1.5A1.5 1.5 0 0 1 0 27.5zM15 15h14v12.5a1.5 1.5 0 0 1-1.5 1.5H15z" fill="url(#winb)" />
        </svg>
      </div>
      <div className="ml-[18px] mt-[10px] flex h-[38px] w-[273px] flex-none items-center overflow-hidden rounded-full bg-[#eff5fa] shadow-[0_1px_1px_rgba(90,120,150,0.6)]">
        <Search size={21} strokeWidth={2} className="ml-[14px] text-[#333]" />
        <span className="ml-[11px] font-['Open_Sans',sans-serif] text-[15.5px] text-[#555]">Search</span>
        <svg viewBox="0 0 60 36" className="ml-auto mr-[3px] h-[36px] w-[60px]">
          <path d="M8 36c2-8 8-11 14-11h12c7 0 12 4 14 11z" fill="#3a6ea8" />
          <path d="M24 26l5 6 5-6z" fill="#e8533a" />
          <circle cx="28" cy="15" r="9" fill="#f5d2b5" />
          <path d="M19 18c-4-8 1-16 9-16s12 5 11 13c-2-6-6-8-10-8s-7 3-10 11z" fill="#e6cfa6" stroke="#b8a27a" strokeWidth=".5" />
          <text x="2" y="20" fontSize="15" fill="#5a3b50">♪</text>
          <text x="41" y="15" fontSize="16" fill="#5a3b50">♪</text>
          <text x="44" y="29" fontSize="14" fill="#5a3b50">♫</text>
        </svg>
      </div>
      <TaskIcon w="w-[30px]" ml="ml-[16px]">
        <svg viewBox="0 0 30 30" className="h-[30px] w-[30px]"><rect x="8" y="0" width="22" height="22" rx="2" fill="#f7f7f7" /><rect x="4" y="6" width="20" height="18" rx="2" fill="#bdbdbd" /><rect x="0" y="10" width="18" height="20" rx="2" fill="#2a2a2a" /></svg>
      </TaskIcon>
      <TaskIcon w="w-[30px]" ml="ml-[25px]" dot>
        <svg viewBox="0 0 30 30" className="h-[30px] w-[30px]"><path d="M0 3a2 2 0 0 1 2-2h9l3 3h14a2 2 0 0 1 2 2v4H0z" fill="#e0a412" /><path d="M0 8h30v20a2 2 0 0 1-2 2H2a2 2 0 0 1-2-2z" fill="#ffd54f" /><rect x="7" y="22" width="16" height="8" rx="1" fill="#1475d1" /><rect x="11" y="24" width="8" height="2" fill="#bfe0ff" /></svg>
      </TaskIcon>
      <TaskIcon w="w-[29px]" ml="ml-[26px]" dot>
        <svg viewBox="0 0 29 30" className="h-[30px] w-[29px]"><ellipse cx="14.5" cy="15" rx="11.5" ry="12.5" fill="none" stroke="#e0202c" strokeWidth="6" /><ellipse cx="14.5" cy="15" rx="5.5" ry="11" fill="none" stroke="#a9111c" strokeWidth="1" /></svg>
      </TaskIcon>
      <TaskIcon w="w-[31px]" ml="ml-[24px]">
        <svg viewBox="0 0 31 30" className="h-[30px] w-[31px]" fill="none"><rect x="0" y="0" width="22" height="22" rx="3" fill="#eaeaea" /><path d="M4 11V4h7" stroke="#d83b01" strokeWidth="2.5" strokeDasharray="3 1.5" /><path d="M14 6l3 18M19 8l-5 16" stroke="#777" strokeWidth="1.5" /><path d="M14 17h10" stroke="#1683d8" strokeWidth="2" /><circle cx="27" cy="15" r="3" stroke="#1683d8" strokeWidth="2" /><circle cx="15" cy="27" r="2.5" stroke="#1683d8" strokeWidth="2" /></svg>
      </TaskIcon>
      <TaskIcon w="w-[30px]" ml="ml-[25px]" dot>
        <div className="flex h-[30px] w-[30px] items-center justify-center rounded-full bg-black font-['Liberation_Sans',sans-serif] text-[17px] font-bold tracking-[-1px] text-white">up</div>
      </TaskIcon>
      <TaskIcon w="w-[29px]" ml="ml-[25px]" dot>
        <ExcelLogo className="h-[30px] w-[29px]" />
      </TaskIcon>
      <div className="ml-auto flex items-center">
        <ChevronUp size={18} strokeWidth={2} className="text-[#222]" />
        <svg viewBox="0 0 22 30" className="ml-[21px] h-[30px] w-[22px]" fill="none" stroke="#333" strokeWidth="1.1"><path d="M14 2H2v19h12M8 21v5M3 26h10" /><rect x="15" y="1" width="5" height="9" rx="2" /><path d="M17.5 10v16" /></svg>
        <Volume2 size={22} strokeWidth={1.1} className="ml-[7px] mr-[1px] text-[#333]" />
        <div className="-mt-[2px] ml-[20px] mr-[25px] flex flex-col items-end text-[14px] leading-[21px]">
          <div>7:38 AM</div>
          <div>12/16/2024</div>
        </div>
      </div>
    </div>
  );
}

export default function App() {
  return (
    <div className="flex h-[1440px] w-[2560px] flex-col overflow-hidden bg-[#f0f0f0] font-['Open_Sans',sans-serif]">
      <TitleBar />
      <MenuBar />
      <Ribbon />
      <FormulaBar />
      <div className="h-[9px] flex-none" />
      <div className="flex h-[1041px] flex-none flex-col">
        <Sheet />
      </div>
      <TabBar />
      <StatusBar />
      <Taskbar />
    </div>
  );
}
